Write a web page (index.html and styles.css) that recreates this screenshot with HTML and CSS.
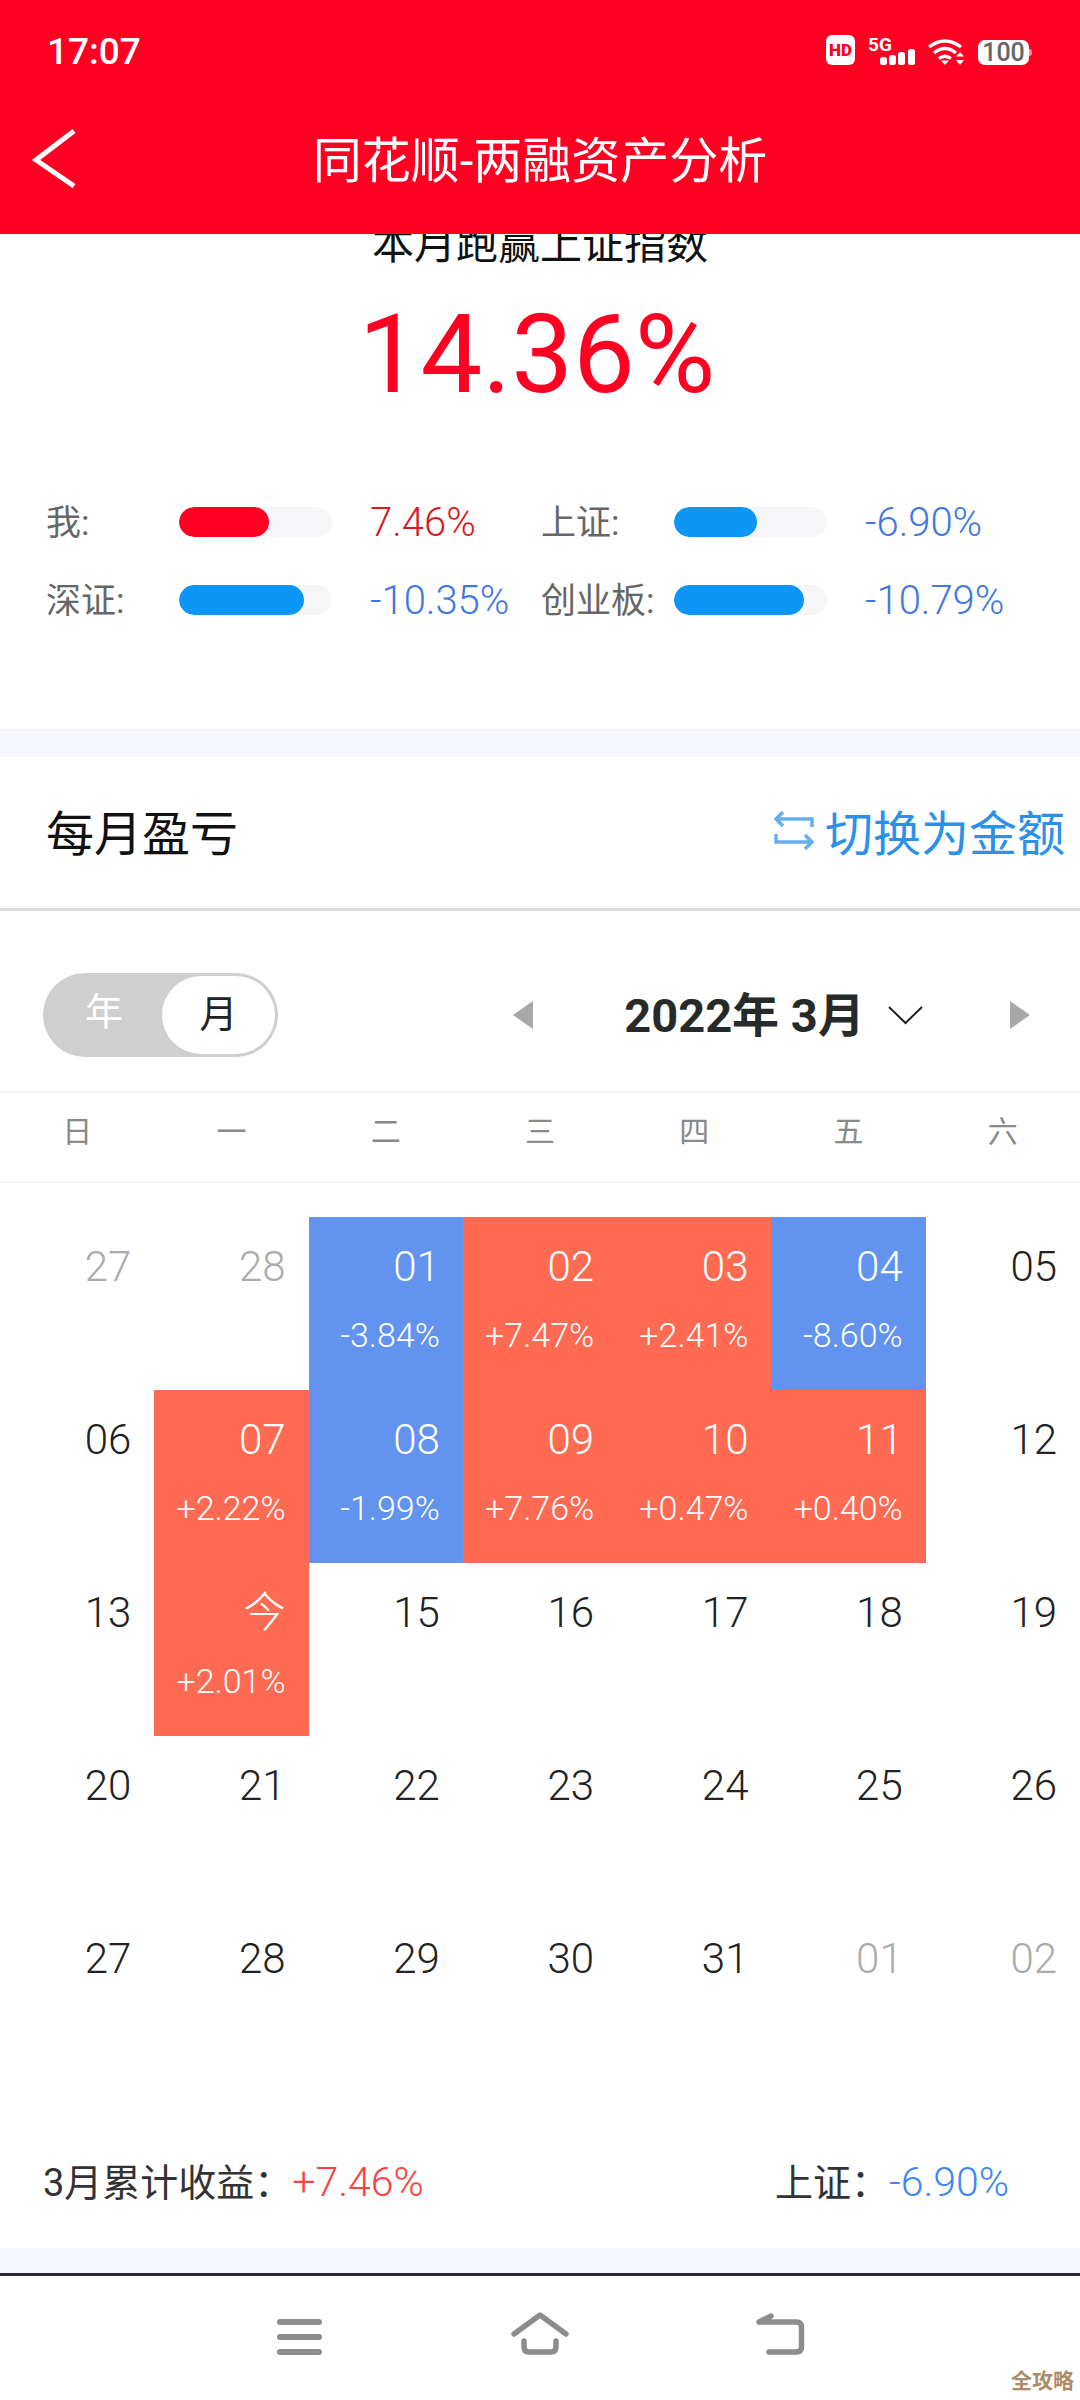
FILE: index.html
```html
<!DOCTYPE html>
<html lang="zh-CN">
<head>
    <meta charset="UTF-8">
    <meta name="viewport" content="width=device-width, initial-scale=1.0">
    <title>同花顺-两融资产分析</title>
    <link rel="stylesheet" href="styles.css">
</head>
<body>

    <!-- Red header with status bar -->
    <header class="top">
        <div class="status">
            <span class="time">17:07</span>
            <div class="status-icons">
                <span class="hd">HD</span>
                <svg class="signal" width="47" height="36" viewBox="0 0 47 36">
                    <text x="0" y="22" class="five-g">5G</text>
                    <rect x="12" y="28" width="7" height="8" rx="2.5" fill="#fff"/>
                    <rect x="21" y="26" width="7" height="10" rx="2.5" fill="#fff"/>
                    <rect x="30" y="23" width="7" height="13" rx="2.5" fill="#fff"/>
                    <rect x="40" y="20" width="7" height="16" rx="2.5" fill="#fff"/>
                </svg>
                <svg class="wifi" width="37" height="27" viewBox="0 0 37 27" fill="none" stroke="#fff" stroke-width="3.4">
                    <path d="M1 9 Q17 -3 33 9"/>
                    <path d="M6 15 Q17 6 28 15"/>
                    <path d="M11 20.5 Q17 16 23 20.5"/>
                    <path d="M17 27 l-4 -4.5 h8 z" fill="#fff" stroke="none"/>
                    <path d="M32 14 l-4 4.5 h8 z M32 27 l-4 -5 h8 z" fill="#fff" stroke="none"/>
                </svg>
                <span class="battery">100</span>
            </div>
        </div>
        <div class="titlebar">
            <svg class="back" width="48" height="60" viewBox="0 0 48 60" fill="none" stroke="#fff" stroke-width="5">
                <path d="M44 3 L6 32 L44 58"/>
            </svg>
            <h1>同花顺-两融资产分析</h1>
        </div>
    </header>

    <!-- Top summary, scrolled under the header -->
    <section class="summary">
        <div class="summary-title"><span>本月跑赢上证指数</span></div>
        <div class="big-num">14.36%</div>
        <div class="compare">
            <div class="cmp-item">
                <span class="cmp-label">我:</span>
                <div class="bar"><div class="fill red" style="width: 59%"></div></div>
                <span class="cmp-val red-text">7.46%</span>
            </div>
            <div class="cmp-item">
                <span class="cmp-label">上证:</span>
                <div class="bar"><div class="fill blue" style="width: 54%"></div></div>
                <span class="cmp-val blue-text">-6.90%</span>
            </div>
            <div class="cmp-item">
                <span class="cmp-label">深证:</span>
                <div class="bar"><div class="fill blue" style="width: 82%"></div></div>
                <span class="cmp-val blue-text">-10.35%</span>
            </div>
            <div class="cmp-item">
                <span class="cmp-label">创业板:</span>
                <div class="bar"><div class="fill blue" style="width: 85%"></div></div>
                <span class="cmp-val blue-text">-10.79%</span>
            </div>
        </div>
    </section>

    <div class="gap"></div>

    <!-- Monthly profit calendar -->
    <section class="month">
        <div class="month-head">
            <h2>每月盈亏</h2>
            <div class="switch">
                <svg width="40" height="39" viewBox="0 0 40 39" fill="none" stroke="#66aef0" stroke-width="3.4">
                    <path d="M9 1 L2 8 L9 15 M2 8 H38 V16"/>
                    <path d="M31 24 L38 31 L31 38 M38 31 H2 V23"/>
                </svg>
                <span>切换为金额</span>
            </div>
        </div>

        <div class="picker">
            <div class="toggle">
                <span class="toggle-off">年</span>
                <span class="toggle-on">月</span>
            </div>
            <div class="picker-date">
                <span class="tri tri-left"></span>
                <div class="date-label">
                    <span>2022年 3月</span>
                    <svg class="chevron" width="35" height="20" viewBox="0 0 35 20" fill="none" stroke="#222" stroke-width="2">
                        <path d="M1 2 L17.5 18 L34 2"/>
                    </svg>
                </div>
                <span class="tri tri-right"></span>
            </div>
        </div>

        <div class="weekdays">
            <span>日</span><span>一</span><span>二</span><span>三</span><span>四</span><span>五</span><span>六</span>
        </div>

        <div class="calendar">
            <div class="day muted"><b>27</b></div>
            <div class="day muted"><b>28</b></div>
            <div class="day loss"><b>01</b><i>-3.84%</i></div>
            <div class="day gain"><b>02</b><i>+7.47%</i></div>
            <div class="day gain"><b>03</b><i>+2.41%</i></div>
            <div class="day loss"><b>04</b><i>-8.60%</i></div>
            <div class="day"><b>05</b></div>

            <div class="day"><b>06</b></div>
            <div class="day gain"><b>07</b><i>+2.22%</i></div>
            <div class="day loss"><b>08</b><i>-1.99%</i></div>
            <div class="day gain"><b>09</b><i>+7.76%</i></div>
            <div class="day gain"><b>10</b><i>+0.47%</i></div>
            <div class="day gain"><b>11</b><i>+0.40%</i></div>
            <div class="day"><b>12</b></div>

            <div class="day"><b>13</b></div>
            <div class="day gain"><b>今</b><i>+2.01%</i></div>
            <div class="day"><b>15</b></div>
            <div class="day"><b>16</b></div>
            <div class="day"><b>17</b></div>
            <div class="day"><b>18</b></div>
            <div class="day"><b>19</b></div>

            <div class="day"><b>20</b></div>
            <div class="day"><b>21</b></div>
            <div class="day"><b>22</b></div>
            <div class="day"><b>23</b></div>
            <div class="day"><b>24</b></div>
            <div class="day"><b>25</b></div>
            <div class="day"><b>26</b></div>

            <div class="day"><b>27</b></div>
            <div class="day"><b>28</b></div>
            <div class="day"><b>29</b></div>
            <div class="day"><b>30</b></div>
            <div class="day"><b>31</b></div>
            <div class="day muted"><b>01</b></div>
            <div class="day muted"><b>02</b></div>
        </div>

        <div class="totals">
            <div>3月累计收益：<span class="total-red">+7.46%</span></div>
            <div>上证：<span class="total-blue">-6.90%</span></div>
        </div>
    </section>

    <div class="gap gap-bottom"></div>

    <!-- Android nav bar -->
    <nav class="navbar">
        <svg width="45" height="36" viewBox="0 0 45 36" fill="none" stroke="#8e8c8e" stroke-width="6" stroke-linecap="round">
            <path d="M3 3 H42 M3 18 H42 M3 33 H42"/>
        </svg>
        <svg class="nav-home" width="58" height="43" viewBox="0 0 58 43" fill="none" stroke="#8e8c8e" stroke-width="5.5" stroke-linecap="round" stroke-linejoin="round">
            <path d="M3 22 L29 3 L55 22"/>
            <path d="M13 29 V35 Q13 40 18 40 H40 Q45 40 45 35 V29"/>
        </svg>
        <svg width="49" height="42" viewBox="0 0 49 42" fill="none" stroke="#8e8c8e" stroke-width="5.5" stroke-linecap="round" stroke-linejoin="round">
            <path d="M15 3 L3 9 H40 Q45.5 9 45.5 14 V34 Q45.5 39 40 39 H13"/>
        </svg>
    </nav>

    <div class="watermark">全攻略</div>

</body>
</html>
```

FILE: styles.css
```css
* {
    box-sizing: border-box;
}

body {
    margin: 0;
    width: 1080px;
    height: 2400px;
    overflow: hidden;
    position: relative;
    background-color: #fff;
    font-family: Roboto, "Noto Sans CJK SC", sans-serif;
    color: #222;
}

/* Header */
.top {
    height: 234px;
    background-color: #ff0022;
    color: #fff;
}

.status {
    height: 102px;
    padding: 29px 48px 0 47px;
    display: flex;
    justify-content: space-between;
    align-items: flex-start;
}

.time {
    font-size: 37px;
    font-weight: 500;
    line-height: 44px;
    margin-top: 1px;
}

.status-icons {
    display: flex;
    align-items: flex-end;
    gap: 13px;
    height: 36px;
}

.hd {
    width: 29px;
    height: 30px;
    background-color: #fff;
    border-radius: 6px;
    color: #ff0022;
    font-size: 17px;
    font-weight: 900;
    text-align: center;
    line-height: 30px;
}

.five-g {
    font-family: Roboto, sans-serif;
    font-size: 19px;
    font-weight: 700;
    fill: #fff;
}

.battery {
    width: 51px;
    height: 25px;
    margin-right: 3px;
    position: relative;
    background-color: #fff;
    border-radius: 7px;
    color: #666;
    font-size: 25px;
    font-weight: 500;
    text-align: center;
    line-height: 25px;
}

.battery::after {
    content: "";
    position: absolute;
    right: -3px;
    top: 9px;
    width: 3px;
    height: 7px;
    border-radius: 0 3px 3px 0;
    background-color: #ff8a98;
}

.titlebar {
    height: 132px;
    position: relative;
    display: flex;
    justify-content: center;
    align-items: flex-start;
}

.back {
    position: absolute;
    left: 30px;
    top: 26px;
}

h1 {
    margin: 0;
    font-size: 49px;
    font-weight: 400;
    line-height: 54px;
    padding-top: 33px;
}

/* Summary */
.summary {
    height: 495px;
    padding: 0 30px;
}

.summary-title {
    height: 38px;
    overflow: hidden;
    display: flex;
    justify-content: center;
    align-items: flex-end;
    font-size: 42px;
    line-height: 54px;
    color: #111;
}

.big-num {
    margin-top: 22px;
    padding-right: 6px;
    text-align: center;
    font-size: 110px;
    font-weight: 400;
    line-height: 122px;
    color: #ff0022;
}

.compare {
    margin-top: 84px;
    display: grid;
    grid-template-columns: 495px 1fr;
    row-gap: 34px;
    padding-left: 16px;
}

.cmp-item {
    height: 44px;
    display: flex;
    align-items: center;
    font-size: 35px;
}

.cmp-label {
    width: 133px;
    padding-bottom: 5px;
    color: #666;
}

.bar {
    width: 153px;
    height: 30px;
    border-radius: 15px;
    background-color: #f6f6f8;
    overflow: hidden;
}

.fill {
    height: 100%;
    border-radius: 15px;
}

.fill.red {
    background-color: #ff0022;
}

.fill.blue {
    background-color: #0c96f8;
}

.cmp-val {
    margin-left: 38px;
    font-size: 40px;
    font-weight: 300;
    white-space: nowrap;
}

.red-text {
    color: #d9191f;
}

.blue-text {
    color: #3f78e0;
}

.gap {
    height: 28px;
    background-color: #f5f7fd;
}

/* Monthly calendar */
.month-head {
    height: 154px;
    padding: 0 15px 5px 46px;
    display: flex;
    justify-content: space-between;
    align-items: center;
    border-bottom: 3px solid #dcdcdc;
}

h2 {
    margin: 0;
    font-size: 48px;
    font-weight: 400;
    color: #111;
}

.switch {
    display: flex;
    align-items: center;
    gap: 11px;
    font-size: 48px;
    color: #2a90ea;
}

.picker {
    height: 180px;
    padding: 62px 50px 0 43px;
    display: flex;
    justify-content: space-between;
    align-items: flex-start;
}

.toggle {
    width: 235px;
    height: 84px;
    border-radius: 42px;
    background-color: #cfcfcf;
    padding: 3px;
    display: flex;
    font-size: 38px;
}

.toggle-off {
    width: 116px;
    color: #fff;
    text-align: center;
    line-height: 72px;
}

.toggle-on {
    flex: 1;
    background-color: #fff;
    border-radius: 39px;
    color: #222;
    text-align: center;
    line-height: 76px;
}

.picker-date {
    width: 517px;
    height: 84px;
    display: flex;
    justify-content: space-between;
    align-items: center;
}

.date-label {
    margin-left: 4px;
    padding-bottom: 8px;
    display: flex;
    align-items: center;
    gap: 23px;
    font-size: 47px;
    font-weight: 700;
    color: #262a28;
}

.chevron {
    margin-top: 8px;
}

.tri {
    width: 0;
    height: 0;
    border-top: 14px solid transparent;
    border-bottom: 14px solid transparent;
}

.tri-left {
    border-right: 20px solid #a9a7aa;
}

.tri-right {
    border-left: 20px solid #a9a7aa;
}

.weekdays {
    height: 92px;
    display: grid;
    grid-template-columns: repeat(7, 1fr);
    align-items: center;
    border-top: 2px solid #f5f5f7;
    border-bottom: 2px solid #f5f5f7;
    color: #8a8a8a;
    font-size: 30px;
    text-align: center;
    padding-bottom: 17px;
}

.calendar {
    margin-top: 34px;
    display: grid;
    grid-template-columns: repeat(7, 1fr);
    grid-auto-rows: 173px;
}

.day {
    padding: 24px 23px 0 0;
    text-align: right;
    display: flex;
    flex-direction: column;
    color: #222;
}

.day b {
    font-size: 42px;
    font-weight: 300;
    line-height: 52px;
}

.day i {
    margin-top: 22px;
    font-size: 34px;
    font-style: normal;
    font-weight: 300;
    line-height: 40px;
}

.day.muted {
    color: #ababab;
}

.day.gain {
    background-color: #ff6a52;
    color: #fff;
}

.day.loss {
    background-color: #6293ee;
    color: #fff;
}

.totals {
    height: 166px;
    padding: 76px 71px 0 43px;
    display: flex;
    justify-content: space-between;
    font-size: 38px;
    line-height: 48px;
    color: #333;
}

.total-red {
    color: #ff4040;
    font-size: 41px;
    font-weight: 300;
}

.total-blue {
    color: #3d87f5;
    font-size: 41px;
    font-weight: 300;
}

.gap-bottom {
    height: 25px;
}

/* Nav bar */
.navbar {
    height: 127px;
    border-top: 3px solid #2a2a2e;
    display: flex;
    justify-content: center;
    align-items: flex-end;
    gap: 187px;
    padding: 0 0 45px 2px;
}

.nav-home {
    margin-left: 2px;
}

.watermark {
    position: absolute;
    right: 6px;
    bottom: 6px;
    font-size: 21px;
    font-weight: 700;
    color: #ad8b66;
}
```
